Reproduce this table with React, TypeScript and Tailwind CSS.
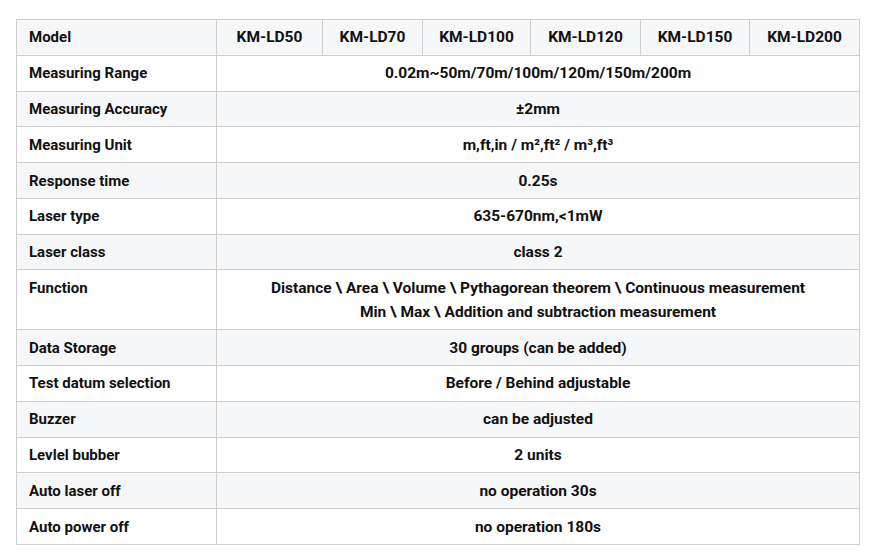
import React from 'react';

const models = ['KM-LD50', 'KM-LD70', 'KM-LD100', 'KM-LD120', 'KM-LD150', 'KM-LD200'];
const modelWidths = ['w-[106px]', 'w-[100px]', 'w-[108px]', 'w-[110px]', 'w-[109px]', 'w-[110px]'];

const rows: { label: string; value: React.ReactNode }[] = [
  { label: 'Measuring Range', value: '0.02m~50m/70m/100m/120m/150m/200m' },
  { label: 'Measuring Accuracy', value: '±2mm' },
  { label: 'Measuring Unit', value: 'm,ft,in / m²,ft² / m³,ft³' },
  { label: 'Response time', value: '0.25s' },
  { label: 'Laser type', value: '635-670nm,<1mW' },
  { label: 'Laser class', value: 'class 2' },
  {
    label: 'Function',
    value: (
      <>
        Distance \ Area \ Volume \ Pythagorean theorem \ Continuous measurement
        <br />
        Min \ Max \ Addition and subtraction measurement
      </>
    ),
  },
  { label: 'Data Storage', value: '30 groups (can be added)' },
  { label: 'Test datum selection', value: 'Before / Behind adjustable' },
  { label: 'Buzzer', value: 'can be adjusted' },
  { label: 'Levlel bubber', value: '2 units' },
  { label: 'Auto laser off', value: 'no operation 30s' },
  { label: 'Auto power off', value: 'no operation 180s' },
];

export default function App() {
  const cell = 'border border-[#cfcfcf] px-3 py-[5.4px] leading-6';
  return (
    <div className="min-h-screen bg-white pl-4 pt-[19px] font-['Roboto',sans-serif] text-[15px] font-bold text-[#111]">
      <table className="w-[843px] table-fixed border-collapse">
        <thead>
          <tr className="bg-[#f6f7f9]">
            <td className={`${cell} w-[200px] text-left`}>Model</td>
            {models.map((m, i) => (
              <td key={m} className={`${cell} ${modelWidths[i]} text-center text-[15.5px]`}>{m}</td>
            ))}
          </tr>
        </thead>
        <tbody>
          {rows.map((r, i) => (
            <tr key={r.label} className={i % 2 === 1 ? 'bg-[#f6f7f9]' : 'bg-white'}>
              <td className={`${cell} text-left align-top`}>{r.label}</td>
              <td colSpan={6} className={`${cell} text-center text-[15.5px]`}>{r.value}</td>
            </tr>
          ))}
        </tbody>
      </table>
    </div>
  );
}
